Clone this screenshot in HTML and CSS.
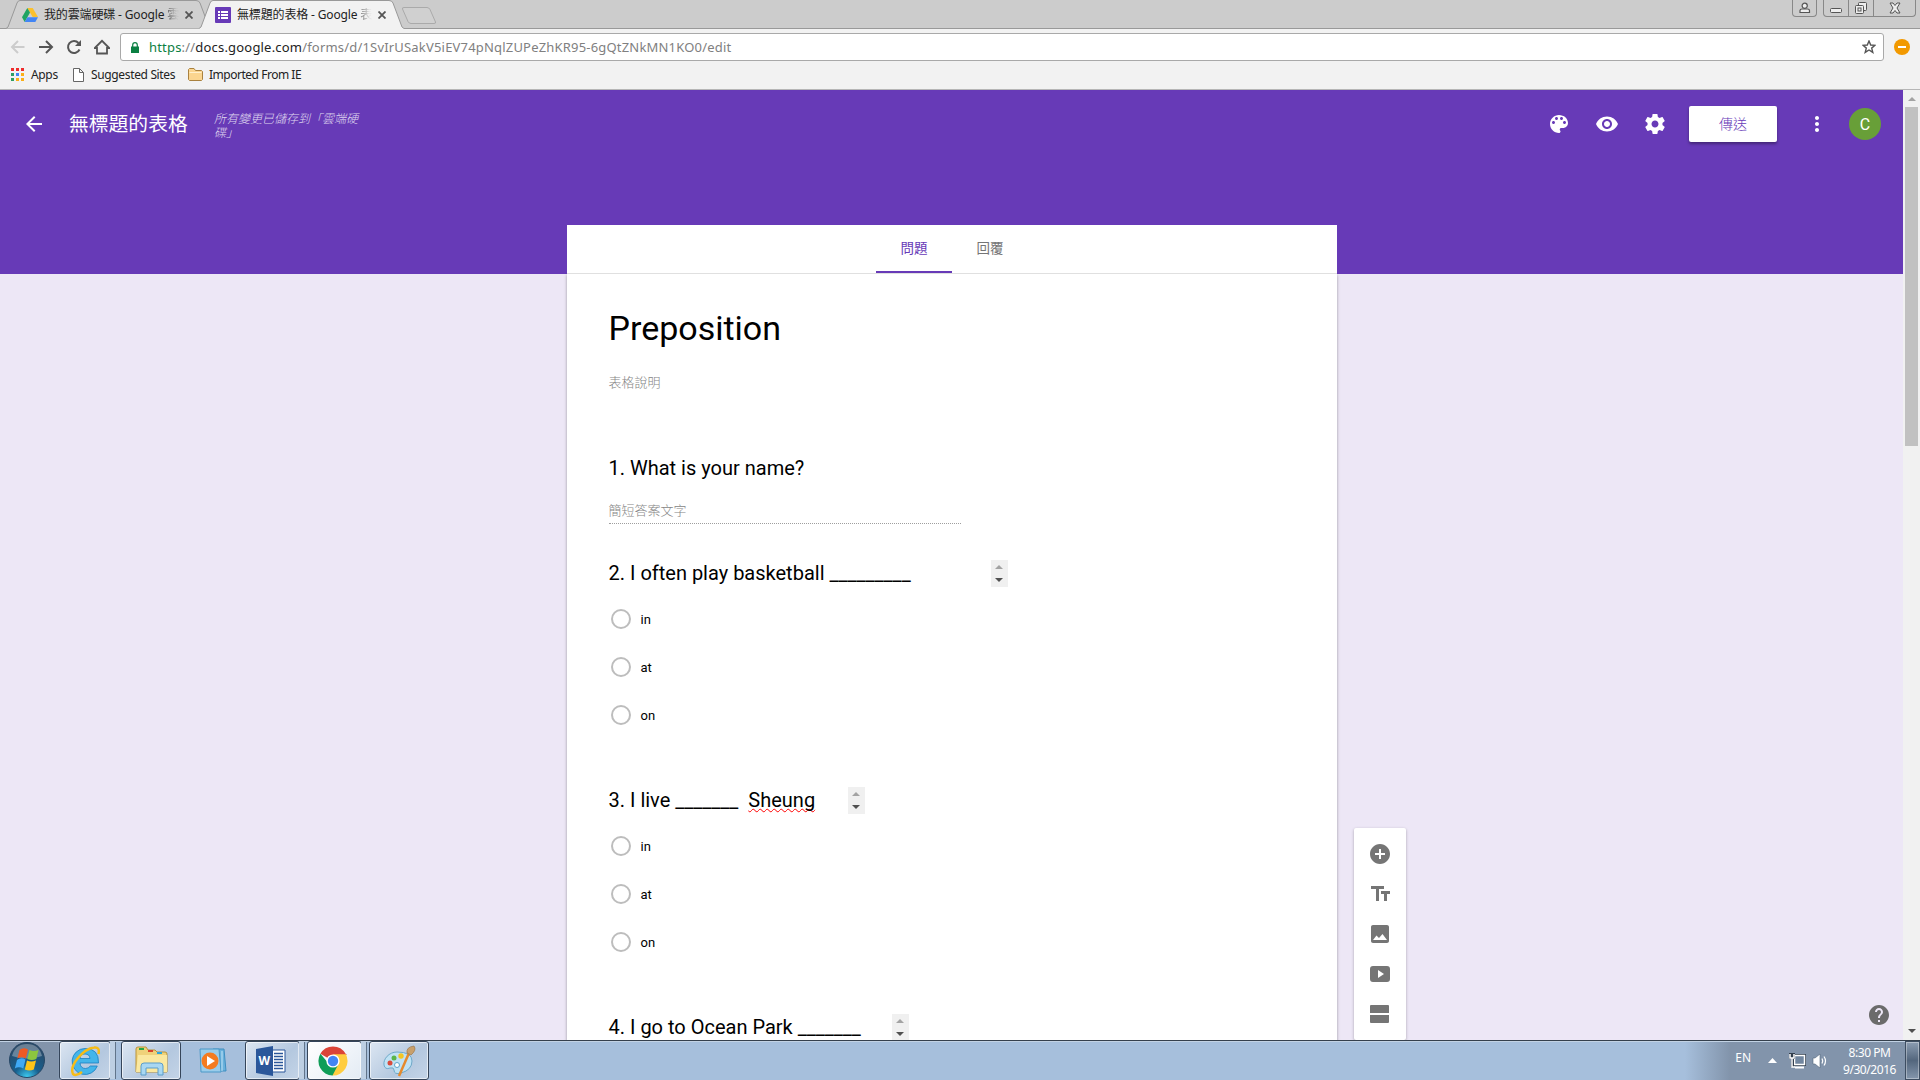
FILE: index.html
```html
<!DOCTYPE html>
<html lang="zh-Hant">
<head>
  <meta charset="UTF-8">
  <title>無標題的表格 - Google 表單</title>
  <link rel="stylesheet" href="styles.css">
</head>
<body>

  <!-- Browser tabs -->
  <div class="tab-strip">
    <div class="browser-tab first">
      <svg class="tab-shape" width="206" height="29"><path d="M0 28.500 2 27 11 3Q12 .5 14 .5H190Q193 .5 194 3L203 27 205 28.500" fill="#d0d0d0" stroke="#999"/></svg>
      <svg class="favicon" width="16" height="14" viewBox="0 0 16 14"><path d="M5.300 0h5.400L16 9h-5.300z" fill="#fbc02d"/><path d="M5.300 0 8 4.600 2.700 14 0 9.300z" fill="#1fa463"/><path d="M5.400 9.300H16L13.300 14H2.700z" fill="#4285f4"/></svg>
      <span class="tab-title">我的雲端硬碟 - Google <span class="fade">雲</span></span>
      <svg class="tab-close" width="8" height="8" viewBox="0 0 8 8"><path d="M.5.5l7 7m0-7l-7 7" stroke="#555" stroke-width="1.800"/></svg>
    </div>
    <div class="browser-tab active">
      <svg class="tab-shape" width="206" height="29"><path d="M0 28.500 2 27 11 3Q12 .5 14 .5H190Q193 .5 194 3L203 27 205 28.500V30H0z" fill="#f2f2f2"/><path d="M0 28.500 2 27 11 3Q12 .5 14 .5H190Q193 .5 194 3L203 27 205 28.500" fill="none" stroke="#999"/></svg>
      <svg class="favicon" width="16" height="16" viewBox="0 0 16 16"><rect width="16" height="16" rx="1" fill="#673ab7"/><path d="M3 4h2v2H3zm3 0h7v2H6zM3 7h2v2H3zm3 0h7v2H6zm-3 3h2v2H3zm3 0h7v2H6z" fill="#fff"/></svg>
      <span class="tab-title">無標題的表格 - Google <span class="fade">表</span></span>
      <svg class="tab-close" width="8" height="8" viewBox="0 0 8 8"><path d="M.5.5l7 7m0-7l-7 7" stroke="#555" stroke-width="1.800"/></svg>
    </div>
    <svg class="new-tab" width="36" height="18"><path d="M3 .5H26Q28 .5 29 2.500L34.500 15Q35 16.500 33 16.500H10Q8 16.500 7 14.500L1.500 2Q1 .5 3 .5z" fill="#d0d0d0" stroke="#aaa"/></svg>
    <div class="window-buttons">
      <div class="user-btn"><svg width="12" height="12" viewBox="0 0 12 12" fill="#eee" stroke="#555" stroke-width="1.200"><path d="M1 10.500V8.500Q1 7 3 7H8.500Q10.500 7 10.500 8.500V10.500z"/><circle cx="5.700" cy="3.800" r="2.600"/></svg></div>
      <div class="window-group">
        <div class="win-btn"><svg width="14" height="12"><rect x="1.500" y="7.500" width="11" height="4" rx="1" fill="#eee" stroke="#555"/></svg></div>
        <div class="win-btn"><svg width="14" height="14" fill="#eee" stroke="#555"><rect x="4.500" y="1.500" width="8" height="8" rx="1"/><rect x="1.500" y="4.500" width="8" height="8" rx="1"/><rect x="4" y="7" width="3" height="3"/></svg></div>
        <div class="win-btn close"><svg width="12" height="12" viewBox="0 0 12 12"><path d="M1 1h3l2 2.500L8 1h3L8 6l3 5H8L6 8.500 4 11H1l3-5z" fill="#eee" stroke="#555"/></svg></div>
      </div>
    </div>
  </div>

  <div class="toolbar">
    <svg class="nav-icon" width="16" height="16" viewBox="0 0 16 16"><path d="M14.500 8H2.500M8 2 2 8l6 6" fill="none" stroke="#ccc" stroke-width="2"/></svg>
    <svg class="nav-icon" width="16" height="16" viewBox="0 0 16 16"><path d="M1 8h12.500M8 2l6 6-6 6" fill="none" stroke="#555" stroke-width="2"/></svg>
    <svg class="nav-icon" width="16" height="16" viewBox="0 0 16 16"><path d="M13.500 10.500A6 6 0 1 1 12.500 4" fill="none" stroke="#555" stroke-width="2"/><path d="M15 1v6H9z" fill="#555"/></svg>
    <svg class="nav-icon" width="16" height="16" viewBox="0 0 16 16"><path d="M.8 9 8 1.800 15.200 9H13v5.500H3V9z" fill="none" stroke="#555" stroke-width="1.800"/></svg>
    <div class="address-bar">
      <svg class="lock" width="8" height="11" viewBox="0 0 8 11"><rect y="4.500" width="8" height="6.500" fill="#0b8043"/><path d="M1.700 5V3a2.300 2.300 0 0 1 4.600 0v2" fill="none" stroke="#0b8043" stroke-width="1.200"/></svg>
      <span class="url"><span class="scheme">https</span>://<span class="host">docs.google.com</span>/forms/d/1SvIrUSakV5iEV74pNqlZUPeZhKR95-6gQtZNkMN1KO0/edit</span>
      <svg class="star" width="14" height="14" viewBox="0 0 14 14"><path d="M7 1l1.700 4 4.300.3-3.300 2.800 1.100 4.300L7 10l-3.800 2.400 1.100-4.300L1 5.300 5.300 5z" fill="none" stroke="#555" stroke-width="1.400"/></svg>
    </div>
    <svg width="16" height="16"><circle cx="8" cy="8" r="8" fill="#f29900"/><path d="M4 7h8v2H4z" fill="#fff"/></svg>
  </div>

  <div class="bookmarks">
    <svg class="apps-icon" width="13" height="13"><path d="M0 0h3v3H0zm5 0h3v3H5zm5 0h3v3h-3z" fill="#ee2b2b"/><path d="M0 5h3v3H0zM0 10h3v3H0z" fill="#2f9e63"/><path d="M5 5h3v3H5z" fill="#4285f4"/><path d="M10 5h3v3h-3zM5 10h3v3H5zm5 0h3v3h-3z" fill="#fbaf17"/></svg>
    <span class="apps-label">Apps</span>
    <svg class="page-icon" width="11" height="14"><path d="M.5.5h6l4 4v9H.5zM6.500.5v4h4" fill="#fff" stroke="#666"/></svg>
    <span class="sites-label">Suggested Sites</span>
    <svg class="folder-icon" width="15" height="13"><path d="M.5 11.500v-10l1-1H6l1.500 2h6l1 1v8l-1 1h-12z" fill="#fbd58f" stroke="#a9813f"/><path d="M1.500 4.500h12" stroke="#fff0cc"/></svg>
    <span class="ie-label">Imported From IE</span>
  </div>

  <div class="viewport">
    <main class="page">
      <header>
        <div class="app-bar">
          <svg class="back" width="24" height="24" viewBox="0 0 24 24"><path d="M20 11H7.830l5.590-5.590L12 4l-8 8 8 8 1.410-1.410L7.830 13H20v-2z"/></svg>
          <h1>無標題的表格</h1>
          <p class="save-status">所有變更已儲存到「雲端硬碟」</p>
          <div class="app-actions">
            <svg width="24" height="24" viewBox="0 0 24 24"><path d="M12 3c-4.970 0-9 4.030-9 9s4.030 9 9 9c.83 0 1.500-.67 1.500-1.500 0-.39-.15-.74-.39-1.010-.23-.26-.38-.61-.38-.99 0-.83.67-1.500 1.500-1.500H16c2.760 0 5-2.240 5-5 0-4.420-4.030-8-9-8zm-5.500 9c-.83 0-1.500-.67-1.500-1.500S5.670 9 6.500 9 8 9.670 8 10.500 7.330 12 6.500 12zm3-4C8.670 8 8 7.330 8 6.500S8.670 5 9.500 5s1.500.67 1.500 1.500S10.330 8 9.500 8zm5 0c-.83 0-1.500-.67-1.500-1.500S13.670 5 14.500 5s1.500.67 1.500 1.500S15.330 8 14.500 8zm3 4c-.83 0-1.500-.67-1.500-1.500S16.670 9 17.500 9s1.500.67 1.500 1.500-.67 1.500-1.500 1.500z"/></svg>
            <svg width="24" height="24" viewBox="0 0 24 24"><path d="M12 4.500C7 4.500 2.730 7.610 1 12c1.730 4.390 6 7.500 11 7.500s9.270-3.110 11-7.500c-1.730-4.390-6-7.500-11-7.500zM12 17c-2.760 0-5-2.240-5-5s2.240-5 5-5 5 2.240 5 5-2.240 5-5 5zm0-8c-1.660 0-3 1.340-3 3s1.340 3 3 3 3-1.340 3-3-1.340-3-3-3z"/></svg>
            <svg width="24" height="24" viewBox="0 0 24 24"><path d="M19.430 12.980c.04-.32.07-.64.07-.98s-.03-.66-.07-.98l2.110-1.650c.19-.15.24-.42.12-.64l-2-3.460c-.12-.22-.39-.3-.61-.22l-2.490 1c-.52-.4-1.080-.73-1.690-.98l-.38-2.650C14.460 2.180 14.250 2 14 2h-4c-.25 0-.46.18-.49.42l-.38 2.650c-.61.25-1.170.59-1.690.98l-2.490-1c-.23-.09-.49 0-.61.22l-2 3.460c-.13.22-.07.49.12.64l2.110 1.650c-.04.32-.07.65-.07.98s.03.66.07.98l-2.110 1.650c-.19.15-.24.42-.12.64l2 3.460c.12.22.39.3.61.22l2.490-1c.52.4 1.080.73 1.690.98l.38 2.650c.03.24.24.42.49.42h4c.25 0 .46-.18.49-.42l.38-2.650c.61-.25 1.170-.59 1.690-.98l2.490 1c.23.09.49 0 .61-.22l2-3.460c.12-.22.07-.49-.12-.64l-2.110-1.650zM12 15.500c-1.930 0-3.500-1.570-3.500-3.500s1.570-3.500 3.500-3.500 3.500 1.570 3.500 3.500-1.570 3.500-3.500 3.500z"/></svg>
            <button class="send-btn">傳送</button>
            <svg class="more" width="24" height="24" viewBox="0 0 24 24"><path d="M12 8c1.100 0 2-.9 2-2s-.9-2-2-2-2 .9-2 2 .9 2 2 2zm0 2c-1.100 0-2 .9-2 2s.9 2 2 2 2-.9 2-2-.9-2-2-2zm0 6c-1.100 0-2 .9-2 2s.9 2 2 2 2-.9 2-2-.9-2-2-2z"/></svg>
            <div class="avatar">C</div>
          </div>
        </div>
        <nav class="form-tabs">
          <div class="form-tab selected">問題</div>
          <div class="form-tab">回覆</div>
        </nav>
      </header>

      <section class="form-card">
        <h2>Preposition</h2>
        <p class="description">表格說明</p>

        <div class="question short">
          <div class="question-title">1. What is your name?</div>
          <div class="short-answer">簡短答案文字</div>
        </div>

        <div class="question">
          <div class="question-title">
            <span class="q2">2. I often play basketball _________</span>
            <span class="spinner"><i class="up"></i><i class="down"></i></span>
          </div>
          <div class="option"><span class="radio"></span>in</div>
          <div class="option"><span class="radio"></span>at</div>
          <div class="option"><span class="radio"></span>on</div>
        </div>

        <div class="question">
          <div class="question-title">
            <span class="q3">3. I live _______ &nbsp;<span class="misspelled">Sheung</span></span>
            <span class="spinner"><i class="up"></i><i class="down"></i></span>
          </div>
          <div class="option"><span class="radio"></span>in</div>
          <div class="option"><span class="radio"></span>at</div>
          <div class="option"><span class="radio"></span>on</div>
        </div>

        <div class="question">
          <div class="question-title">
            <span class="q4">4. I go to Ocean Park _______</span>
            <span class="spinner"><i class="up"></i><i class="down"></i></span>
          </div>
        </div>
      </section>

      <aside class="side-tools">
        <svg width="24" height="24" viewBox="0 0 24 24"><path d="M12 2C6.480 2 2 6.480 2 12s4.480 10 10 10 10-4.480 10-10S17.520 2 12 2zm5 11h-4v4h-2v-4H7v-2h4V7h2v4h4v2z"/></svg>
        <svg width="24" height="24" viewBox="0 0 24 24"><path d="M3 4v3h5v12h3V7h5V4H3zm19 5h-9v3h3v7h3v-7h3V9z"/></svg>
        <svg width="24" height="24" viewBox="0 0 24 24"><path d="M21 19V5c0-1.100-.9-2-2-2H5c-1.100 0-2 .9-2 2v14c0 1.100.9 2 2 2h14c1.100 0 2-.9 2-2zM5 18l3.500-4.500 2.500 2.500 3.500-4L19 18z"/></svg>
        <svg width="24" height="24" viewBox="0 0 24 24"><path d="M5 4h14q3 0 3 3v10q0 3-3 3H5q-3 0-3-3V7q0-3 3-3zm5 4v8l6-4z"/></svg>
        <svg width="24" height="24" viewBox="0 0 24 24"><path d="M3 3h17q1 0 1 1v7H2V4q0-1 1-1zM2 13h19v7q0 1-1 1H3q-1 0-1-1z"/></svg>
      </aside>

      <svg class="help" width="24" height="24" viewBox="0 0 24 24"><path d="M12 2C6.480 2 2 6.480 2 12s4.480 10 10 10 10-4.480 10-10S17.520 2 12 2zm1 17h-2v-2h2v2zm2.070-7.750l-.9.920C13.450 12.900 13 13.500 13 15h-2v-.5c0-1.100.45-2.100 1.170-2.830l1.240-1.260c.37-.36.59-.86.59-1.410 0-1.100-.9-2-2-2s-2 .9-2 2H8c0-2.210 1.790-4 4-4s4 1.790 4 4c0 .88-.36 1.680-.93 2.250z"/></svg>
    </main>

    <div class="scrollbar">
      <i class="up"></i>
      <div class="thumb"></div>
      <i class="down"></i>
    </div>
  </div>

  <!-- Windows taskbar -->
  <footer class="taskbar">
    <div class="start">
      <svg width="38" height="38" viewBox="0 0 38 38">
        <defs><radialGradient id="orb" cx=".5" cy="1" r=".9"><stop offset="0" stop-color="#3fd0f5"/><stop offset=".4" stop-color="#17608f"/><stop offset="1" stop-color="#2a4a68"/></radialGradient></defs>
        <circle cx="19" cy="19" r="17.500" fill="url(#orb)" stroke="#274766"/>
        <path d="M4 15Q7 3 19 3t15 12Q19 20 4 15z" fill="#fff" opacity=".3"/>
        <path d="M11.500 9q4-3 8.500-.5l-2.200 9q-4.500-2.500-8.500 0z" fill="#ee5a24"/><path d="M21.500 9q4 2 9 0l-2.200 9q-4.500 2-9 0z" fill="#8cc63f"/>
        <path d="M9 19q4-3 8.500-.5l-2.200 9q-4.500-2.500-8.500 0z" fill="#3fa9f5"/><path d="M19 19.500q4 2 9 0l-2.200 9q-4.500 2-9 0z" fill="#fcc419"/>
      </svg>
    </div>
    <div class="task stacked ie">
      <svg width="32" height="32" viewBox="0 0 32 32">
        <path d="M16 3.500a13 13 0 1 0 12.300 17.500h-7Q19.500 23.500 16.500 23.500q-5 0-5.500-5.500H29.500Q30 3.500 16 3.500zm-5 10q.5-4.500 5-4.500t5 4.500z" fill="#43b5ea" stroke="#1b7fc0" stroke-width=".8"/>
        <path d="M29.500 9q1.500-7.500-4.500-6.500-8 1-16 10.500T4 29q3 2.500 9-2" fill="none" stroke="#f7bc16" stroke-width="2.500"/>
      </svg>
    </div>
    <div class="task explorer">
      <svg width="34" height="32" viewBox="0 0 34 32">
        <path d="M2 4q0-2 2-2h8l2 3h7l2 2h8q2 0 2 2v18H2z" fill="#efd27a" stroke="#b99338"/>
        <path d="M4 10h29v17H2z" fill="#fae8a0"/><path d="M5 3h5v2H5z" fill="#28a745"/><path d="M14 5h5v2h-5z" fill="#d9442b"/><path d="M23 7h5v2h-5z" fill="#2aa6df"/>
        <path d="M7 30V21q0-3 3-3h16q3 0 3 3v9h-5v-7H12v7z" fill="#a8d7f2" stroke="#5a9dca"/>
      </svg>
    </div>
    <div class="task plain">
      <svg width="30" height="26" viewBox="0 0 30 26">
        <path d="M14 1h11l2 22H14z" fill="#69b1dc" stroke="#3e8fc1"/><path d="M1 1h19l2 23H2z" fill="#9accea" stroke="#4b99c8"/><path d="M23 3v20" stroke="#c3e5f8"/>
        <circle cx="11" cy="13" r="8.500" fill="#f47b20"/><path d="M8 8v10l8-5z" fill="#fff"/>
      </svg>
    </div>
    <div class="task stacked word">
      <svg width="32" height="32" viewBox="0 0 32 32">
        <path d="M16 5h14v22H16z" fill="#fff" stroke="#2b579a"/><path d="M19 8.500h9m-9 3h9m-9 3h9m-9 3h9m-9 3h9m-9 3h9" stroke="#2b579a" stroke-width="1.300"/>
        <path d="M1 4l17-3v30L1 28z" fill="#2b579a"/><text class="word-letter" x="3.500" y="20">W</text>
      </svg>
    </div>
    <div class="task stacked chrome">
      <svg width="30" height="30" viewBox="0 0 30 30">
        <path d="M15 15 2.400 7.700A14.500 14.500 0 0 1 27.600 7.700L29 9H15z" fill="#db4437"/>
        <path d="M27.900 8.300A14.500 14.500 0 0 1 15 29.500L13.500 29 20 16 15 8.300z" fill="#ffcd40"/>
        <path d="M2.400 7.700A14.500 14.500 0 0 0 14.500 29.500L20.500 18H15L8.500 15z" fill="#0f9d58"/>
        <circle cx="15" cy="15" r="6.600" fill="#fff"/><circle cx="15" cy="15" r="5.200" fill="#4285f4"/>
      </svg>
    </div>
    <div class="task paint">
      <svg width="34" height="32" viewBox="0 0 34 32">
        <path d="M15 7C7 7 1 14 2 20q1 5 6 3 4-1 4 2 0 5 7 3 11-3 11-12 0-9-15-9z" fill="#bfe2f4" stroke="#6fa9c9"/>
        <circle cx="8" cy="18" r="2.500" fill="#d94b3d"/><circle cx="12" cy="13" r="2.500" fill="#59b54a"/><circle cx="19" cy="11" r="2.700" fill="#f3c623"/><circle cx="15" cy="20" r="2.500" fill="#fff" stroke="#5fa4cc"/>
        <path d="M27 8 17 31" stroke="#e58a2c" stroke-width="2.500"/><path d="M25 8q-1-6 7-7 3 4-3 9z" fill="#c8a06c" stroke="#97713e" stroke-width=".6"/>
      </svg>
    </div>
    <div class="tray">
      <span class="lang">EN</span>
      <svg class="tray-arrow" width="9" height="5"><path d="M4.500 0 9 5H0z" fill="#fff"/></svg>
      <svg class="network" width="17" height="16"><rect x="5.500" y="2.500" width="10" height="9" fill="#71869f" stroke="#333f4d" stroke-width="3"/><rect x="5.500" y="2.500" width="10" height="9" fill="#71869f" stroke="#fff" stroke-width="1.500"/><path d="M6 14.500h9" stroke="#fff" stroke-width="2"/><path d="M0 0h6v6H5v8H2V6H0z" fill="#333f4d"/><path d="M1 1v4h4V1M3 5v9h3" fill="none" stroke="#fff" stroke-width="1.500"/></svg>
      <svg class="speaker" width="16" height="16"><path d="M1 5h2l5-4v14l-5-4H1z" fill="#fff" stroke="#53657a" stroke-width=".6"/><path d="M10 5.500q1.500 2.500 0 5M12 3.500q3 4.500 0 9" fill="none" stroke="#fff" stroke-width="1.200"/></svg>
      <div class="clock">8:30 PM<br>9/30/2016</div>
      <div class="show-desktop"></div>
    </div>
  </footer>

</body>
</html>
```

FILE: styles.css
```css
* {
  box-sizing: border-box;
}

body {
  margin: 0;
  width: 1920px;
  height: 1080px;
  overflow: hidden;
  display: flex;
  flex-direction: column;
  background: #f2f2f2;
  font-family: "Noto Sans", "Noto Sans CJK TC", sans-serif;
  font-size: 12px;
  color: #222;
}

svg {
  display: block;
  flex: none;
}

h1, h2, p {
  margin: 0;
  font-weight: normal;
}

/* Browser tabs */
.tab-strip {
  height: 29px;
  flex: none;
  display: flex;
  padding-left: 6px;
  background: #ccc;
  border-bottom: 1px solid #999;
}

.browser-tab {
  position: relative;
  width: 206px;
  height: 29px;
  flex: none;
  display: flex;
  align-items: center;
  padding: 1px 0 0 16px;
}

.browser-tab.active {
  margin-left: -13px;
}

.tab-shape {
  position: absolute;
  left: 0;
  top: 0;
}

.favicon,
.tab-title,
.tab-close {
  position: relative;
}

.tab-title {
  width: 137px;
  margin-left: 6px;
  white-space: nowrap;
  line-height: 20px;
  letter-spacing: -0.15px;
}

.fade {
  color: transparent;
  background: linear-gradient(to right, rgba(0, 0, 0, 0.6), rgba(0, 0, 0, 0.05) 80%);
  -webkit-background-clip: text;
  background-clip: text;
}

.tab-close {
  margin-left: 4px;
}

.new-tab {
  margin: 7px 0 0 -4px;
}

.window-buttons {
  display: flex;
  margin-left: auto;
  padding-right: 4px;
}

.user-btn,
.window-group {
  height: 17px;
  display: flex;
  border: 1px solid #888;
  border-top: none;
  border-radius: 0 0 4px 4px;
}

.user-btn {
  width: 25px;
  margin-right: 6px;
  justify-content: center;
  padding-top: 2px;
}

.win-btn {
  width: 25px;
  display: flex;
  justify-content: center;
  padding-top: 1px;
  border-right: 1px solid #888;
}

.win-btn.close {
  width: 41px;
  border-right: none;
  padding-top: 2px;
}

/* Toolbar and bookmarks */
.toolbar {
  height: 35px;
  flex: none;
  display: flex;
  align-items: center;
  padding: 1px 0 0 10px;
}

.nav-icon {
  margin-right: 12px;
}

.address-bar {
  width: 1764px;
  height: 28px;
  margin: 0 10px 0 -2px;
  display: flex;
  align-items: center;
  background: #fff;
  border: 1px solid #a9a9a9;
  border-radius: 3px;
}

.lock {
  margin-left: 10px;
}

.url {
  margin-left: 10px;
  font-size: 13px;
  letter-spacing: 0.19px;
  color: #808080;
  white-space: nowrap;
}

.scheme {
  color: #0b8043;
}

.host {
  color: #222;
}

.star {
  margin: 0 7px 0 auto;
}

.bookmarks {
  height: 26px;
  flex: none;
  display: flex;
  align-items: center;
  padding: 0 0 4px 11px;
  border-bottom: 1px solid #b6b6b6;
  white-space: nowrap;
  letter-spacing: -0.35px;
}

.apps-label {
  width: 42px;
  margin-left: 7px;
}

.sites-label {
  width: 97px;
  margin-left: 7px;
}

.ie-label {
  letter-spacing: -0.48px;
}

.folder-icon {
  margin-right: 6px;
}

/* Page */
.viewport {
  height: 950px;
  flex: none;
  display: flex;
}

.page {
  position: relative;
  width: 1903px;
  height: 950px;
  overflow: hidden;
  background: #ede7f6;
  font-family: Roboto, "Noto Sans CJK TC", sans-serif;
}

header {
  height: 184px;
  display: flex;
  flex-direction: column;
  justify-content: space-between;
  background: #673ab7;
}

.app-bar {
  height: 68px;
  display: flex;
  align-items: center;
  padding: 0 22px;
  color: #fff;
  fill: #fff;
}

h1 {
  width: 145px;
  margin-left: 23px;
  padding-top: 2px;
  font-size: 19.800px;
  line-height: 28px;
  white-space: nowrap;
}

.save-status {
  width: 150px;
  padding-top: 3px;
  font-size: 12px;
  font-weight: 300;
  line-height: 14px;
  font-style: italic;
  color: rgba(255, 255, 255, 0.8);
}

.app-actions {
  display: flex;
  align-items: center;
  gap: 24px;
  margin-left: auto;
}

.send-btn {
  width: 88px;
  height: 36px;
  margin: 0 4px 0 -2px;
  padding: 0 0 3px;
  border: none;
  border-radius: 2px;
  background: #fff;
  box-shadow: 0 2px 3px rgba(0, 0, 0, 0.35);
  color: #673ab7;
  font-family: inherit;
  font-size: 14px;
  font-weight: 300;
}

.more {
  margin-right: -4px;
}

.avatar {
  width: 32px;
  height: 32px;
  border-radius: 50%;
  background: #689f38;
  font-size: 16px;
  line-height: 33px;
  text-align: center;
}

.form-tabs {
  width: 770px;
  height: 49px;
  margin-left: 567px;
  display: flex;
  justify-content: center;
  background: #fff;
  border-bottom: 1px solid #e0e0e0;
}

.form-tab {
  width: 76px;
  height: 48px;
  font-size: 13.500px;
  line-height: 46px;
  text-align: center;
  color: #757575;
}

.form-tab.selected {
  color: #673ab7;
  border-bottom: 2px solid #673ab7;
}

.form-card {
  width: 770px;
  height: 1200px;
  margin-left: 567px;
  padding: 34px 41.500px;
  background: #fff;
  box-shadow: 0 1px 3px rgba(0, 0, 0, 0.35);
  color: #000;
}

h2 {
  font-size: 34px;
  line-height: 40px;
}

.description {
  margin: 25px 0 63px;
  font-size: 13px;
  font-weight: 300;
  line-height: 20px;
  color: #858585;
}

.question {
  margin-bottom: 49px;
}

.question.short {
  margin-bottom: 37px;
}

.question-title {
  height: 24px;
  margin-bottom: 10px;
  display: flex;
  align-items: center;
  font-size: 20px;
  line-height: 24px;
  white-space: nowrap;
}

.short-answer {
  width: 352px;
  margin-top: 19px;
  border-bottom: 1px dotted #9e9e9e;
  font-size: 13px;
  font-weight: 300;
  line-height: 24px;
  color: #858585;
}

.q2 {
  width: 382px;
}

.q3 {
  width: 239px;
}

.q4 {
  width: 283px;
}

.misspelled {
  text-decoration: underline wavy #f00 1px;
  text-decoration-skip-ink: none;
  text-underline-offset: 1px;
}

.spinner {
  width: 17px;
  height: 27px;
  flex: none;
  display: flex;
  flex-direction: column;
  justify-content: space-between;
  align-items: center;
  padding: 5px 0;
  background: #f0f0f0;
}

.up,
.down {
  border: 4px solid transparent;
}

.up {
  border-top: none;
  border-bottom-color: #a3a3a3;
}

.down {
  border-bottom: none;
  border-top-color: #505050;
}

.option {
  height: 48px;
  display: flex;
  align-items: center;
  font-size: 13px;
}

.radio {
  width: 20px;
  height: 20px;
  margin: 0 10px 0 2px;
  border: 2px solid #bdbdbd;
  border-radius: 50%;
}

.side-tools {
  position: absolute;
  left: 1354px;
  top: 738px;
  width: 52px;
  height: 212px;
  display: flex;
  flex-direction: column;
  align-items: center;
  gap: 16px;
  padding-top: 14px;
  background: #fff;
  border-radius: 2px;
  box-shadow: 0 1px 3px rgba(0, 0, 0, 0.3);
  fill: #757575;
}

.help {
  position: absolute;
  right: 12px;
  bottom: 13px;
  fill: #6b6b6b;
}

.scrollbar {
  width: 17px;
  display: flex;
  flex-direction: column;
  align-items: center;
  padding: 7px 0;
  background: #f1f1f1;
}

.thumb {
  width: 13px;
  height: 339px;
  margin: 6px 0 auto;
  background: #c1c1c1;
}

/* Taskbar */
.taskbar {
  height: 40px;
  flex: none;
  display: flex;
  border-top: 1px solid #35404d;
  background: linear-gradient(to right, #8294ab 58px, #a6bfdc 62px, #a6bfdc 1685px, #8294ab 1730px);
  box-shadow: inset 0 1px 0 #c2d2e4;
}

.start {
  width: 59px;
  padding-left: 8px;
}

.task {
  position: relative;
  height: 39px;
  display: flex;
  align-items: center;
  justify-content: center;
  border: 1px solid #35455a;
  border-radius: 3px;
  background: linear-gradient(135deg, #dce6f2, #b4c8df 60%, #c4d4e7);
  box-shadow: inset 0 0 0 1px rgba(255, 255, 255, 0.6);
}

/* Edge of the window stack behind the front button */
.task.stacked::after {
  content: "";
  position: absolute;
  left: 100%;
  top: 0;
  width: 5px;
  height: 37px;
  border-right: 1px solid #61748a;
  background: #bdcfe3;
}

.task.ie {
  width: 52px;
  margin-right: 10px;
}

.task.explorer {
  width: 60px;
}

.task.plain {
  width: 64px;
  padding-left: 2px;
  border: none;
  background: none;
  box-shadow: none;
}

.task.word {
  width: 55px;
  margin-right: 7px;
}

.task.chrome {
  width: 55px;
  margin-right: 7px;
  padding-right: 3px;
  background: linear-gradient(135deg, #fff, #e3ebf4);
}

.task.word {
  padding-right: 3px;
}

.task.paint {
  width: 60px;
}

.word-letter {
  font: bold 12px "Open Sans", sans-serif;
  fill: #fff;
}

.tray {
  display: flex;
  align-items: center;
  margin-left: auto;
  color: #fff;
}

.lang {
  margin: 0 17px 7px 0;
}

.network {
  margin-left: 12px;
}

.speaker {
  margin-left: 6px;
}

.clock {
  width: 77px;
  padding-left: 6px;
  line-height: 17px;
  letter-spacing: -0.45px;
  text-align: center;
}

.show-desktop {
  width: 15px;
  height: 39px;
  border: 1px solid #3d4d61;
  background: linear-gradient(#8c9db2, #53667d 50%, #8496ac);
  box-shadow: inset 0 0 0 1px rgba(255, 255, 255, 0.35);
}
```
